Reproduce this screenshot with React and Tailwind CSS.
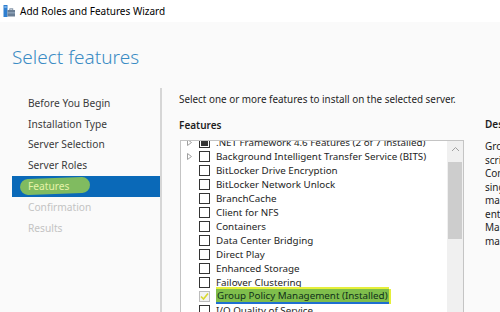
import React from "react";

const font = { fontFamily: '"Noto Sans", "Open Sans", sans-serif' };

function Triangle() {
  return (
    <svg width="5" height="7" viewBox="0 0 5 7" className="block">
      <path d="M0.5 0.5 L4.5 3.5 L0.5 6.5 Z" fill="none" stroke="#a0a0a0" strokeWidth="1" />
    </svg>
  );
}

function Box({ state }) {
  if (state === "partial") {
    return (
      <div className="w-[11px] h-[11px] border border-[#333] bg-white flex items-center justify-center">
        <div className="w-[7px] h-[7px] bg-[#333]" />
      </div>
    );
  }
  if (state === "checked") {
    return (
      <div className="w-[11px] h-[11px] border border-[#bcbcbc] bg-[#f2f2f2] relative">
        <svg width="11" height="11" viewBox="0 0 11 11" className="absolute -left-[1px] -top-[1px]">
          <path d="M2 5.5 L4.5 8 L9 2.5" fill="none" stroke="#d8d830" strokeWidth="1.6" />
        </svg>
      </div>
    );
  }
  return <div className="w-[11px] h-[11px] border border-[#333] bg-white" />;
}

const rows = [
  { t: ".NET Framework 4.6 Features (2 of 7 installed)", arrow: true, state: "partial" },
  { t: "Background Intelligent Transfer Service (BITS)", arrow: true },
  { t: "BitLocker Drive Encryption" },
  { t: "BitLocker Network Unlock" },
  { t: "BranchCache" },
  { t: "Client for NFS" },
  { t: "Containers" },
  { t: "Data Center Bridging" },
  { t: "Direct Play" },
  { t: "Enhanced Storage" },
  { t: "Failover Clustering" },
  { t: "Group Policy Management (Installed)", state: "checked", hl: true },
  { t: "I/O Quality of Service" },
];

const nav = [
  { t: "Before You Begin" },
  { t: "Installation Type" },
  { t: "Server Selection" },
  { t: "Server Roles" },
  { t: "Features", sel: true },
  { t: "Confirmation", dim: true },
  { t: "Results", dim: true },
];

const desc = [
  "Group Policy Management is a",
  "scriptable Microsoft Management",
  "Console (MMC) snap-in, providing a",
  "single administrative tool for",
  "managing Group Policy across the",
  "enterprise. Group Policy",
  "Management is the standard tool for",
  "managing Group Policy.",
];

export default function App() {
  return (
    <div style={font} className="w-[500px] h-[312px] overflow-hidden bg-[#fafafa] text-[#1e1e1e] flex flex-col">
      {/* title bar */}
      <div className="h-[22px] bg-white flex items-center pl-[3px] shrink-0">
        <svg width="12" height="12" viewBox="0 0 12 12" className="block">
          <rect x="0.5" y="0" width="4" height="12" fill="#2f7fd0" />
          <rect x="1.3" y="1.5" width="2.4" height="1" fill="#bfe0ff" />
          <rect x="4.5" y="5" width="7.5" height="6.5" fill="#6b7f95" />
          <rect x="6.8" y="3.8" width="3" height="1.4" fill="none" stroke="#6b7f95" strokeWidth="0.8" />
          <rect x="4.5" y="7.5" width="7.5" height="0.8" fill="#a9c0d6" />
        </svg>
        <span className="ml-[5px] text-[10px] leading-none text-black">Add Roles and Features Wizard</span>
      </div>
      {/* header */}
      <div className="h-[66px] shrink-0 pl-[12px] pt-[22px]">
        <div className="text-[19px] leading-[26px] text-[#3a8cc4] font-light">Select features</div>
      </div>
      {/* body */}
      <div className="flex flex-1 min-h-0">
        <div className="w-[162px] shrink-0 border-r-2 border-[#d6d6d6] pl-[12px] pt-[5px]">
          {nav.map((n) => (
            <div
              key={n.t}
              className={
                "h-[20.8px] w-[148px] flex items-center pl-[16px] text-[10.2px] relative " +
                (n.sel ? "bg-[#0a69b8]" : "") +
                (n.dim ? " text-[#c3c3c3]" : n.sel ? "" : " text-[#3a3a3a]")
              }
            >
              {n.sel && (
                <div className="absolute left-[8px] top-[2px] w-[70px] h-[16px] rounded-[9px] bg-[#8dc456] opacity-90 -rotate-2" />
              )}
              <span className={n.sel ? "relative text-[#e6f3a8]" : ""}>{n.t}</span>
            </div>
          ))}
        </div>
        <div className="flex-1 min-w-0 pl-[17px] pt-[3px] relative">
          <div className="text-[9.9px] leading-[16px] text-[#1e1e1e] whitespace-nowrap">
            Select one or more features to install on the selected server.
          </div>
          <div className="mt-[10px] text-[10px] leading-[16px] font-semibold text-[#1e1e1e]">Features</div>
          <div className="flex mt-[7px]">
            <div className="w-[284px] h-[200px] border border-[#c4c4c4] bg-white flex ml-[1px] overflow-hidden shrink-0">
              <div className="flex-1 overflow-hidden">
                <div className="-mt-[6px]">
                  {rows.map((r) => (
                    <div key={r.t} className="h-[14px] flex items-center whitespace-nowrap">
                      <div className="w-[18px] pl-[6px] flex items-center">{r.arrow && <Triangle />}</div>
                      <Box state={r.state} />
                      <span
                        className={
                          "ml-[6px] text-[9.8px] leading-[13px] " +
                          (r.hl
                            ? "bg-[#7fbe4c] text-[#10301a] px-[1px] shadow-[0_-2px_0_#e5ef3a,2px_0_0_#e5ef3a] border-b-2 border-[#1f6fd0]"
                            : "text-[#1e1e1e]")
                        }
                      >
                        {r.t}
                      </span>
                    </div>
                  ))}
                </div>
              </div>
              <div className="w-[16px] bg-[#f0f0f0] flex flex-col items-center shrink-0">
                <svg width="9" height="6" viewBox="0 0 9 6" className="mt-[5px] block">
                  <path d="M1 5 L4.5 1.5 L8 5" fill="none" stroke="#a0a0a0" strokeWidth="1" />
                </svg>
                <div className="mt-[10px] w-[14px] h-[77px] bg-[#cdcdcd]" />
              </div>
            </div>
            <div className="ml-[21px] -mt-[24px] whitespace-nowrap">
              <div className="text-[10px] leading-[16px] font-semibold">Description</div>
              <div className="mt-[8px] text-[10px] leading-[13.5px]">
                {desc.map((d) => (
                  <div key={d}>{d}</div>
                ))}
              </div>
            </div>
          </div>
        </div>
      </div>
    </div>
  );
}
